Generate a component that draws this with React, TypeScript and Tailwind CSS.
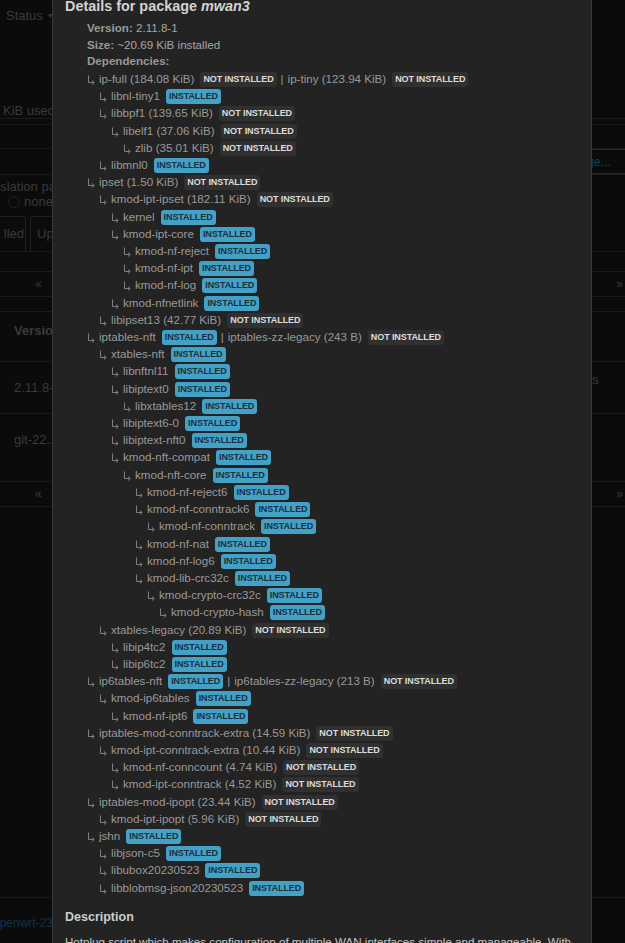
type Dep = {
  d: number
  name: string
  size?: string
  ok: boolean
  alt?: { name: string; size?: string; ok: boolean }
}

const deps: Dep[] = [
  { d: 0, name: 'ip-full', size: '184.08 KiB', ok: false, alt: { name: 'ip-tiny', size: '123.94 KiB', ok: false } },
  { d: 1, name: 'libnl-tiny1', ok: true },
  { d: 1, name: 'libbpf1', size: '139.65 KiB', ok: false },
  { d: 2, name: 'libelf1', size: '37.06 KiB', ok: false },
  { d: 3, name: 'zlib', size: '35.01 KiB', ok: false },
  { d: 1, name: 'libmnl0', ok: true },
  { d: 0, name: 'ipset', size: '1.50 KiB', ok: false },
  { d: 1, name: 'kmod-ipt-ipset', size: '182.11 KiB', ok: false },
  { d: 2, name: 'kernel', ok: true },
  { d: 2, name: 'kmod-ipt-core', ok: true },
  { d: 3, name: 'kmod-nf-reject', ok: true },
  { d: 3, name: 'kmod-nf-ipt', ok: true },
  { d: 3, name: 'kmod-nf-log', ok: true },
  { d: 2, name: 'kmod-nfnetlink', ok: true },
  { d: 1, name: 'libipset13', size: '42.77 KiB', ok: false },
  { d: 0, name: 'iptables-nft', ok: true, alt: { name: 'iptables-zz-legacy', size: '243 B', ok: false } },
  { d: 1, name: 'xtables-nft', ok: true },
  { d: 2, name: 'libnftnl11', ok: true },
  { d: 2, name: 'libiptext0', ok: true },
  { d: 3, name: 'libxtables12', ok: true },
  { d: 2, name: 'libiptext6-0', ok: true },
  { d: 2, name: 'libiptext-nft0', ok: true },
  { d: 2, name: 'kmod-nft-compat', ok: true },
  { d: 3, name: 'kmod-nft-core', ok: true },
  { d: 4, name: 'kmod-nf-reject6', ok: true },
  { d: 4, name: 'kmod-nf-conntrack6', ok: true },
  { d: 5, name: 'kmod-nf-conntrack', ok: true },
  { d: 4, name: 'kmod-nf-nat', ok: true },
  { d: 4, name: 'kmod-nf-log6', ok: true },
  { d: 4, name: 'kmod-lib-crc32c', ok: true },
  { d: 5, name: 'kmod-crypto-crc32c', ok: true },
  { d: 6, name: 'kmod-crypto-hash', ok: true },
  { d: 1, name: 'xtables-legacy', size: '20.89 KiB', ok: false },
  { d: 2, name: 'libip4tc2', ok: true },
  { d: 2, name: 'libip6tc2', ok: true },
  { d: 0, name: 'ip6tables-nft', ok: true, alt: { name: 'ip6tables-zz-legacy', size: '213 B', ok: false } },
  { d: 1, name: 'kmod-ip6tables', ok: true },
  { d: 2, name: 'kmod-nf-ipt6', ok: true },
  { d: 0, name: 'iptables-mod-conntrack-extra', size: '14.59 KiB', ok: false },
  { d: 1, name: 'kmod-ipt-conntrack-extra', size: '10.44 KiB', ok: false },
  { d: 2, name: 'kmod-nf-conncount', size: '4.74 KiB', ok: false },
  { d: 2, name: 'kmod-ipt-conntrack', size: '4.52 KiB', ok: false },
  { d: 0, name: 'iptables-mod-ipopt', size: '23.44 KiB', ok: false },
  { d: 1, name: 'kmod-ipt-ipopt', size: '5.96 KiB', ok: false },
  { d: 0, name: 'jshn', ok: true },
  { d: 1, name: 'libjson-c5', ok: true },
  { d: 1, name: 'libubox20230523', ok: true },
  { d: 1, name: 'libblobmsg-json20230523', ok: true },
]

const indent = ['pl-0', 'pl-3', 'pl-6', 'pl-9', 'pl-12', 'pl-15', 'pl-18']

function Badge({ ok }: { ok: boolean }) {
  return ok ? (
    <span className="ml-[6px] inline-block h-[15px] rounded-[3px] bg-[#45a0c6] px-[3px] align-[1px] text-[9px] font-bold leading-[15px] tracking-[-0.01em] text-[#16303d]">
      INSTALLED
    </span>
  ) : (
    <span className="ml-[6px] inline-block h-[15px] rounded-[3px] bg-[#303030] px-[3px] align-[1px] text-[9px] font-bold leading-[15px] tracking-[-0.01em] text-[#dcdcdc]">
      NOT INSTALLED
    </span>
  )
}

function Arrow() {
  return (
    <span className="inline-block w-[12px]">
      <svg width="8" height="10" viewBox="0 0 8 10" className="inline-block align-[-2px]" fill="none" stroke="#8a8a8a" strokeWidth="0.9">
        <path d="M1.5 0.5 V7.5 H7" />
        <path d="M5 5.5 L7.2 7.5 L5 9.5" />
      </svg>
    </span>
  )
}

function Background() {
  const line = 'border-b border-[#1b1b1b]'
  return (
    <div className="flex h-[943px] w-full flex-col overflow-hidden bg-[#0b0b0b] text-[12px] text-[#3a3a3a]">
      <div className="flex h-[32px] items-center pl-[6px] text-[13px]">
        Status <span className="ml-[4px] text-[7px]">▼</span>
      </div>
      <div className={`flex h-[87px] items-end pl-[3px] text-[13px] leading-[14px] ${line}`}>KiB used</div>
      <div className={`h-[6px] ${line}`} />
      <div className={`h-[24px] ${line}`} />
      <div className={`flex h-[26px] justify-end ${line}`}>
        <div className="flex h-[25px] w-[56px] items-center border-y border-[#0f3247] pl-[18px] text-[#14415a]">ge...</div>
      </div>
      <div className="flex h-[40px] flex-col pt-[4px] text-[13px] leading-[15px]">
        <span className="-ml-[7px]">nslation pac</span>
        <span className="flex items-center pl-[8px]">
          <span className="mr-[4px] inline-block h-[12px] w-[12px] rounded-full border border-[#222]" />
          none
        </span>
      </div>
      <div className={`flex h-[37px] items-end gap-[4px] ${line}`}>
        <div className="flex h-[35px] w-[26px] items-center justify-end rounded-tr-[3px] border-r border-t border-[#1e1e1e] pr-[1px] text-[13px]">lled</div>
        <div className="flex h-[35px] w-[40px] items-center rounded-tl-[3px] border-l border-t border-[#1e1e1e] pl-[6px] text-[13px]">Up</div>
      </div>
      <div className={`h-[20px] ${line}`} />
      <div className={`flex h-[25px] items-center justify-between pl-[35px] pr-[2px] ${line}`}>
        <span>«</span>
        <span>»</span>
      </div>
      <div className={`h-[15px] ${line}`} />
      <div className={`flex h-[50px] items-start pl-[14px] pt-[9px] text-[13px] font-bold ${line}`}>Version</div>
      <div className={`flex h-[52px] items-center justify-between pl-[14px] text-[13px] ${line}`}>
        <span>2.11.8-1</span>
        <span className="mb-[16px] w-[33px]">s</span>
      </div>
      <div className={`flex h-[68px] items-start pl-[14px] pt-[16px] text-[13px] ${line}`}>git-22.1</div>
      <div className={`flex h-[25px] items-center justify-between pl-[35px] pr-[2px] ${line}`}>
        <span>«</span>
        <span>»</span>
      </div>
      <div className={`h-[391px] ${line}`} />
      <div className="flex h-[40px] items-start pt-[16px] text-[12px] text-[#10344a]">
        <span className="-ml-[7px]">openwrt-23.05</span>
      </div>
    </div>
  )
}

export default function App() {
  return (
    <div className="relative h-[943px] w-[625px] overflow-hidden font-['Liberation_Sans',Arial,sans-serif]">
      <Background />
      <div className="absolute left-[52px] top-[-20px] h-[1000px] w-[540px] border-x border-[#383838] bg-[#232323] px-[12px] pt-[16px]">
        <h4 className="mb-[4px] text-[14.4px] font-bold leading-[20px] text-[#d2d2d2]">
          Details for package <em>mwan3</em>
        </h4>
        <ul className="pl-[22px] text-[11.6px] text-[#999999]">
          <li className="leading-[16.67px]">
            <strong>Version:</strong> <span className="text-[#a6a6a6]">2.11.8-1</span>
          </li>
          <li className="leading-[16.67px]">
            <strong>Size:</strong> <span className="text-[#a6a6a6]">~20.69 KiB installed</span>
          </li>
          <li className="leading-[16.67px]">
            <strong>Dependencies:</strong>
          </li>
          <li className="leading-[17.2px]">
            {deps.map((dep, i) => (
              <div key={i} className={`whitespace-nowrap ${indent[dep.d]}`}>
                <Arrow />
                {dep.name}
                {dep.size ? ` (${dep.size})` : ''}
                <Badge ok={dep.ok} />
                {dep.alt && (
                  <>
                    <span className="mx-[4px]">|</span>
                    {dep.alt.name}
                    {dep.alt.size ? ` (${dep.alt.size})` : ''}
                    <Badge ok={dep.alt.ok} />
                  </>
                )}
              </div>
            ))}
          </li>
        </ul>
        <h5 className="mt-[13px] text-[12.5px] font-bold leading-[17px] text-[#cdcdcd]">Description</h5>
        <p className="mt-[7px] text-[11.6px] leading-[17.2px] text-[#c6c6c6]">
          Hotplug script which makes configuration of multiple WAN interfaces simple and manageable. With
          loadbalancing/failover support for up to 250 wan interfaces, connection tracking and an easy to manage
          traffic ruleset.
        </p>
      </div>
    </div>
  )
}
